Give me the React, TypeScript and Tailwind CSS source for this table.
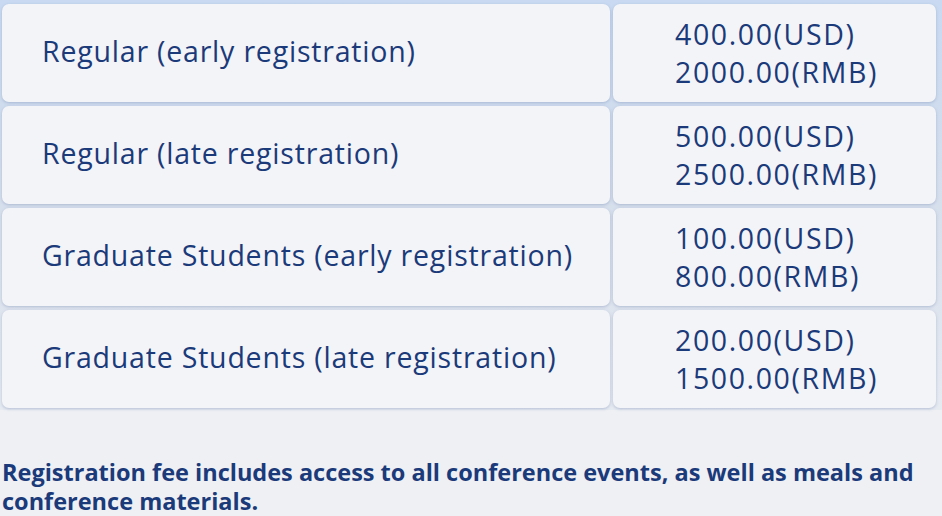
import React from "react";

const rows = [
  ["Regular (early registration)", "400.00(USD)", "2000.00(RMB)"],
  ["Regular (late registration)", "500.00(USD)", "2500.00(RMB)"],
  ["Graduate Students (early registration)", "100.00(USD)", "800.00(RMB)"],
  ["Graduate Students (late registration)", "200.00(USD)", "1500.00(RMB)"],
];

export default function App() {
  return (
    <div
      className="w-[942px] h-[516px] overflow-hidden bg-[#eef0f4] text-[#1b3a7a]"
      style={{ fontFamily: '"Open Sans", "Noto Sans", sans-serif' }}
    >
      <div className="pl-[2px] pt-[4px] pb-[2px] w-[942px] bg-gradient-to-b from-[#c8d9f1] via-[#d6dfec] to-[#e6eaf1]">
        <div className="w-[934px] grid grid-cols-[608px_323px] gap-x-[3px] gap-y-[4px]">
          {rows.map((r, i) => (
            <React.Fragment key={i}>
              <div className="h-[98px] rounded-[7px] bg-[#f3f4f7] shadow-[0_1px_3px_rgba(120,140,180,0.45)] flex items-center pl-[40px] pb-[4px] text-[28.5px] font-medium tracking-[0.8px]">
                {r[0]}
              </div>
              <div className="h-[98px] rounded-[7px] bg-[#f3f4f7] shadow-[0_1px_3px_rgba(120,140,180,0.45)] flex flex-col justify-center pl-[62px] text-[28.5px] font-medium leading-[38px] tracking-[1.6px]">
                <div>{r[1]}</div>
                <div>{r[2]}</div>
              </div>
            </React.Fragment>
          ))}
        </div>
      </div>
      <p className="mt-[48px] ml-[2px] w-[935px] text-[23.5px] font-bold leading-[29px]">
        Registration fee includes access to all conference events, as well as meals and conference materials.
      </p>
    </div>
  );
}
